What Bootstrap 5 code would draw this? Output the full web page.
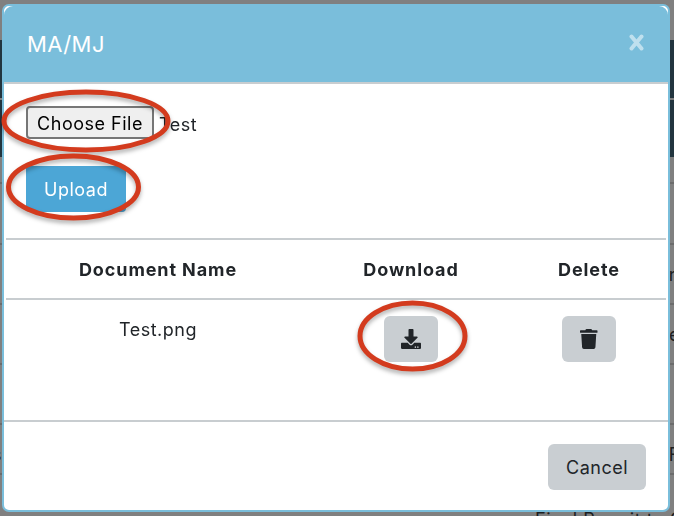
<!DOCTYPE html>
<html lang="en">
<head>
<meta charset="utf-8">
<title>MA/MJ</title>
<link href="https://cdn.jsdelivr.net/npm/bootstrap@5.3.0/dist/css/bootstrap.min.css" rel="stylesheet">
<style>
html, body { height: 100%; overflow: hidden; }
body { background: #808080; font-family: Inter, "Liberation Sans", sans-serif; font-size: 18px; color: #212529; }

/* page dimmed behind the modal */
.behind { height: 516px; overflow: hidden; color: #1c1f22; letter-spacing: .5px; }
.behind-top { height: 40px; }
.behind-head { height: 58px; background: #22353f; margin-bottom: 2px; }
.behind-head.second { height: 57px; margin-bottom: 0; }
.behind-row { display: flex; justify-content: space-between; overflow: hidden; white-space: nowrap; border-bottom: 2px solid #6c6c6c; line-height: 20px; }
.behind-row span:first-child { margin-left: -8px; }
.behind-row span:last-child { margin-right: -6px; }
.r1 { height: 27px; }
.r2 { height: 61px; }
.r3, .r4, .r5 { height: 60px; padding-top: 20px; }
.r6 { height: 50px; padding-top: 20px; }
.behind-last { padding: 35px 0 0 535px; line-height: 20px; white-space: nowrap; }

.modal .modal-dialog { margin: 4px 4px 4px 2px; max-width: 668px; width: 668px; }
.modal .modal-content { height: 508px; border: 2px solid #7abedb; border-radius: 7px; background: #fff; overflow: hidden; }
.modal .modal-header { height: 78px; padding: 0 24px 0 23px; background: #7abedb; border-bottom: 2px solid #c8cdd0; border-radius: 9px 9px 0 0; align-items: center; justify-content: space-between; flex-shrink: 0; }
.dlg-title { margin: 0; font-size: 22px; font-weight: 400; line-height: 24px; color: #fff; letter-spacing: .4px; }
.dlg-close { padding: 0; border: 0; background: none; line-height: 0; margin-top: -3px; }
.modal .modal-body { padding: 22px 2px 0; flex: 1 1 auto; }
.pick-row { padding-left: 20px; display: flex; align-items: center; gap: 5px; height: 33px; }
.pick-btn { width: 128px; height: 33px; padding: 2px 0 0; background: #efefef; border: 2px solid #767676; border-radius: 4px; color: #000; font-size: 18px; line-height: 1; letter-spacing: .5px; }
.pick-name { letter-spacing: .5px; padding-top: 3px; }
.up-row { padding: 27px 0 26px 20px; }
.btn.up-btn { width: 100px; height: 46px; padding: 0; background: #4ca6d6; border: 0; border-radius: 0 0 4px 4px; color: #fff; font-size: 18px; letter-spacing: .5px; }
.doc-table { margin: 0; width: 660px; table-layout: fixed; font-size: 18px; letter-spacing: .5px; }
.doc-table > :not(caption) > * > * { padding: 0; border: 0; background: transparent; box-shadow: none; text-align: center; color: #212529; }
.doc-table thead { border-top: 2px solid #c8cdd0; }
.doc-table thead tr { border-bottom: 2px solid #c8cdd0; }
.doc-table th { height: 60px; vertical-align: middle; font-weight: 700; letter-spacing: .9px; }
.doc-table td { height: 120px; vertical-align: top; }
.doc-table td.cell-text { padding-top: 17px; line-height: 26px; }
.doc-table td.cell-btn { padding-top: 16px; }
.btn.tool-btn { width: 54px; height: 46px; padding: 0; background: #c9ced2; border: 0; border-radius: 6px; display: inline-flex; align-items: center; justify-content: center; }
.modal .modal-footer { padding: 22px; border-top: 2px solid #c8cdd0; height: 90px; flex-shrink: 0; display: flex; justify-content: flex-end; align-items: flex-start; border-radius: 0; }
.btn.off-btn { width: 98px; height: 46px; padding: 0; margin: 0; background: #c9ced2; border: 0; border-radius: 6px; color: #212529; font-size: 18px; letter-spacing: .5px; }

.marks { position: fixed; left: 0; top: 0; z-index: 2000; pointer-events: none; filter: drop-shadow(0 3px 2px rgba(0,0,0,.3)); }
</style>
</head>
<body>
<div class="behind" aria-hidden="true">
  <div class="behind-top"></div>
  <div class="behind-head"></div>
  <div class="behind-head second"></div>
  <div class="behind-row r1"></div>
  <div class="behind-row r2"></div>
  <div class="behind-row r3"><span></span><span>n</span></div>
  <div class="behind-row r4"><span></span><span>e</span></div>
  <div class="behind-row r5"><span>l</span><span>i</span></div>
  <div class="behind-row r6"><span>s</span><span>F</span></div>
  <div class="behind-last">Final Permit to C</div>
</div>

<div class="modal d-block" tabindex="-1">
  <div class="modal-dialog">
    <div class="modal-content">
      <div class="modal-header">
        <h5 class="dlg-title">MA/MJ</h5>
        <button type="button" class="dlg-close" aria-label="Close">
          <svg width="15" height="17" viewBox="0 0 15 17"><path d="M2.500 2.500 12.500 14.500M12.500 2.500 2.500 14.500" stroke="#bfe0ee" stroke-width="4" stroke-linecap="round" fill="none"/></svg>
        </button>
      </div>
      <div class="modal-body">
        <div class="pick-row">
          <button type="button" class="pick-btn">Choose File</button>
          <span class="pick-name">Test</span>
        </div>
        <div class="up-row"><button type="button" class="btn up-btn">Upload</button></div>
        <table class="table doc-table">
          <colgroup><col style="width:304px"><col style="width:202px"><col style="width:154px"></colgroup>
          <thead>
            <tr><th>Document Name</th><th>Download</th><th>Delete</th></tr>
          </thead>
          <tbody>
            <tr>
              <td class="cell-text">Test.png</td>
              <td class="cell-btn">
                <button type="button" class="btn tool-btn" aria-label="Download">
                  <svg width="20" height="20" viewBox="0 0 512 512" fill="#212529"><path d="M216 0h80c13.300 0 24 10.700 24 24v168h87.700c17.800 0 26.700 21.500 14.100 34.100L269.700 378.300c-7.500 7.500-19.800 7.500-27.300 0L90.100 226.100c-12.600-12.600-3.700-34.100 14.100-34.100H192V24c0-13.300 10.700-24 24-24zm296 376v112c0 13.300-10.700 24-24 24H24c-13.300 0-24-10.700-24-24V376c0-13.300 10.700-24 24-24h146.700l49 49c20.100 20.100 52.500 20.100 72.600 0l49-49H488c13.300 0 24 10.700 24 24zm-124 88c0-11-9-20-20-20s-20 9-20 20 9 20 20 20 20-9 20-20zm64 0c0-11-9-20-20-20s-20 9-20 20 9 20 20 20 20-9 20-20z"/></svg>
                </button>
              </td>
              <td class="cell-btn">
                <button type="button" class="btn tool-btn" aria-label="Delete">
                  <svg width="17.500" height="20" viewBox="0 0 448 512" fill="#212529"><path d="M432 32H312l-9.400-18.700A24 24 0 0 0 281.100 0H166.800a23.720 23.720 0 0 0-21.400 13.300L136 32H16A16 16 0 0 0 0 48v32a16 16 0 0 0 16 16h416a16 16 0 0 0 16-16V48a16 16 0 0 0-16-16zM53.200 467a48 48 0 0 0 47.900 45h245.800a48 48 0 0 0 47.900-45L416 128H32z"/></svg>
                </button>
              </td>
            </tr>
          </tbody>
        </table>
      </div>
      <div class="modal-footer">
        <button type="button" class="btn off-btn">Cancel</button>
      </div>
    </div>
  </div>
</div>

<svg class="marks" width="674" height="516" viewBox="0 0 674 516" fill="none" stroke="#d33b1e" stroke-width="5" aria-hidden="true">
  <ellipse cx="86" cy="121" rx="82" ry="29"/>
  <ellipse cx="73.500" cy="187" rx="65" ry="31"/>
  <ellipse cx="412.500" cy="336" rx="52.500" ry="33"/>
</svg>

<script src="https://cdn.jsdelivr.net/npm/bootstrap@5.3.0/dist/js/bootstrap.bundle.min.js"></script>
</body>
</html>
